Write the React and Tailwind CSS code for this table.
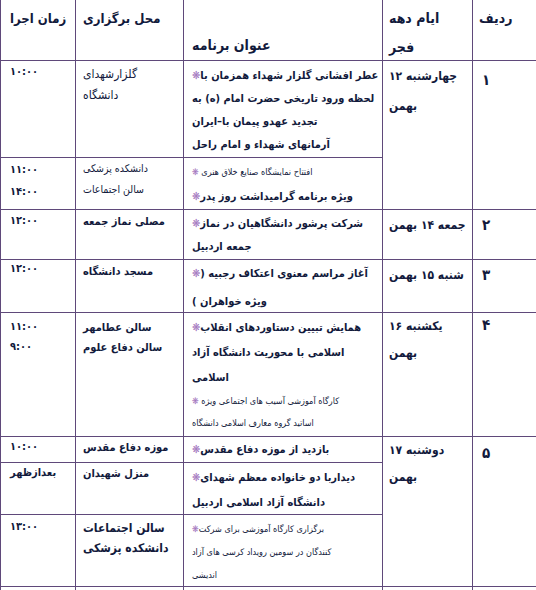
import React from "react";

const Star = () => <span className="text-[#a274bd]">❋</span>;

function Line({ children, className = "" }) {
  return <div className={`whitespace-nowrap ${className}`}>{children}</div>;
}

export default function App() {
  return (
    <div className="w-[536px] h-[590px] overflow-hidden bg-white">
      <div
        dir="rtl"
        className="grid w-[537px] px-px gap-px bg-[#5f497a] text-[#121a3c] font-['DejaVu_Sans_Condensed','DejaVu_Sans',sans-serif] font-stretch-condensed text-left grid-cols-[63px_89px_198px_107px_74px] grid-rows-[60px_96px_51px_49px_52px_123px_25px_51px_71px_30px]"
      >
        {/* header */}
        <div className="bg-white col-start-1 row-start-1 pl-[6px] pt-[4px] text-[14px] leading-[29px] font-bold"><Line>ردیف</Line></div>
        <div className="bg-white col-start-2 row-start-1 pl-[6px] pt-[4px] text-[14px] leading-[29px] font-bold">
          <Line>ایام دهه</Line>
          <Line>فجر</Line>
        </div>
        <div className="bg-white col-start-3 row-start-1 pl-[8px] pt-[31px] text-[14px] leading-[29px] font-bold"><Line>عنوان برنامه</Line></div>
        <div className="bg-white col-start-4 row-start-1 pl-[7px] pt-[4px] text-[13px] leading-[29px] font-bold"><Line>محل برگزاری</Line></div>
        <div className="bg-white col-start-5 row-start-1 pl-[9px] pt-[4px] text-[13px] leading-[29px] font-bold"><Line>زمان اجرا</Line></div>

        {/* row 1 */}
        <div className="bg-white col-start-1 row-start-2 row-span-2 pl-[9px] pt-[4px] text-[15px] leading-[30px] font-bold">۱</div>
        <div className="bg-white col-start-2 row-start-2 row-span-2 pl-[6px] pt-0 text-[12px] leading-[30px] font-bold">
          <Line>چهارشنبه ۱۲</Line>
          <Line>بهمن</Line>
        </div>
        <div className="bg-white col-start-3 row-start-2 pl-[8px] pt-[3px] text-[11px] leading-[23px] font-bold">
          <Line>عطر افشانی گلزار شهداء همزمان با<Star /></Line>
          <Line>لحظه ورود تاریخی حضرت امام (ه) به</Line>
          <Line>تجدید عهدو پیمان با–ایران </Line>
          <Line>آرمانهای شهداء و امام راحل</Line>
        </div>
        <div className="bg-white col-start-4 row-start-2 pl-[7px] pt-[3px] text-[12px] leading-[21px]">
          <Line>گلزارشهدای</Line>
          <Line>دانشگاه</Line>
        </div>
        <div className="bg-white col-start-5 row-start-2 pl-[9px] pt-[2px] text-[11px] leading-[18px] font-bold">
          <Line>۱۰:۰۰</Line>
        </div>

        <div className="bg-white col-start-3 row-start-3 pl-[8px] pt-[2px]">
          <Line className="text-[9px] leading-[24px]">افتتاح نمایشگاه صنایع خلاق هنری <Star /></Line>
          <Line className="text-[11px] leading-[26px] font-bold">ویژه برنامه گرامیداشت روز پدر<Star /></Line>
        </div>
        <div className="bg-white col-start-4 row-start-3 pl-[7px] pt-0 text-[10.5px] leading-[21px]">
          <Line>دانشکده پزشکی</Line>
          <Line>سالن اجتماعات</Line>
        </div>
        <div className="bg-white col-start-5 row-start-3 pl-[9px] pt-[1px] text-[11px] leading-[22px] font-bold">
          <Line>۱۱:۰۰</Line>
          <Line>۱۴:۰۰</Line>
        </div>

        {/* row 2 */}
        <div className="bg-white col-start-1 row-start-4 pl-[9px] pt-0 text-[15px] leading-[30px] font-bold">۲</div>
        <div className="bg-white col-start-2 row-start-4 pl-[6px] pt-0 text-[12px] leading-[30px] font-bold">
          <Line>جمعه ۱۴ بهمن</Line>
        </div>
        <div className="bg-white col-start-3 row-start-4 pl-[8px] pt-[2px] text-[11px] leading-[23px] font-bold">
          <Line>شرکت پرشور دانشگاهیان در نماز<Star /></Line>
          <Line>جمعه اردبیل</Line>
        </div>
        <div className="bg-white col-start-4 row-start-4 pl-[7px] pt-px text-[11px] leading-[22px] font-bold">
          <Line>مصلی نماز جمعه</Line>
        </div>
        <div className="bg-white col-start-5 row-start-4 pl-[9px] pt-[2px] text-[11px] leading-[18px] font-bold">
          <Line>۱۲:۰۰</Line>
        </div>

        {/* row 3 */}
        <div className="bg-white col-start-1 row-start-5 pl-[9px] pt-0 text-[15px] leading-[30px] font-bold">۳</div>
        <div className="bg-white col-start-2 row-start-5 pl-[6px] pt-0 text-[12px] leading-[30px] font-bold">
          <Line>شنبه ۱۵ بهمن</Line>
        </div>
        <div className="bg-white col-start-3 row-start-5 pl-[8px] pt-0 text-[11px] leading-[28px] font-bold">
          <Line>آغاز مراسم معنوی اعتکاف رجبیه (<Star /></Line>
          <Line>ویژه خواهران  )</Line>
        </div>
        <div className="bg-white col-start-4 row-start-5 pl-[7px] pt-px text-[11px] leading-[22px] font-bold">
          <Line>مسجد دانشگاه</Line>
        </div>
        <div className="bg-white col-start-5 row-start-5 pl-[9px] pt-0 text-[11px] leading-[18px] font-bold">
          <Line>۱۲:۰۰</Line>
        </div>

        {/* row 4 */}
        <div className="bg-white col-start-1 row-start-6 pl-[9px] pt-0 text-[15px] leading-[24px] font-bold">۴</div>
        <div className="bg-white col-start-2 row-start-6 pl-[6px] pt-0 text-[12px] leading-[27px] font-bold">
          <Line>یکشنبه ۱۶</Line>
          <Line>بهمن</Line>
        </div>
        <div className="bg-white col-start-3 row-start-6 pl-[8px] pt-[2px]">
          <div className="text-[11px] leading-[25px] font-bold">
            <Line>همایش تبیین دستاوردهای انقلاب<Star /></Line>
            <Line>اسلامی با محوریت دانشگاه آزاد</Line>
            <Line>اسلامی</Line>
          </div>
          <div className="text-[9px] leading-[22px]">
            <Line>کارگاه آموزشی آسیب های اجتماعی ویژه <Star /></Line>
            <Line>اساتید گروه معارف اسلامی دانشگاه</Line>
          </div>
        </div>
        <div className="bg-white col-start-4 row-start-6 pl-[7px] pt-[5px] text-[11px] leading-[20px] font-bold">
          <Line>سالن عطامهر</Line>
          <Line>سالن دفاع علوم</Line>
        </div>
        <div className="bg-white col-start-5 row-start-6 pl-[9px] pt-[4px] text-[11px] leading-[20px] font-bold">
          <Line>۱۱:۰۰</Line>
          <Line>۹:۰۰</Line>
        </div>

        {/* row 5 */}
        <div className="bg-white col-start-1 row-start-7 row-span-3 pl-[9px] pt-px text-[15px] leading-[30px] font-bold">۵</div>
        <div className="bg-white col-start-2 row-start-7 row-span-3 pl-[6px] pt-0 text-[12px] leading-[27px] font-bold">
          <Line>دوشنبه ۱۷</Line>
          <Line>بهمن</Line>
        </div>
        <div className="bg-white col-start-3 row-start-7 pl-[8px] pt-[1px] text-[11px] leading-[24px] font-bold">
          <Line>بازدید از موزه دفاع مقدس<Star /></Line>
        </div>
        <div className="bg-white col-start-4 row-start-7 pl-[7px] pt-0 text-[11px] leading-[22px] font-bold">
          <Line>موزه دفاع مقدس</Line>
        </div>
        <div className="bg-white col-start-5 row-start-7 pl-[9px] pt-px text-[11px] leading-[18px] font-bold">
          <Line>۱۰:۰۰</Line>
        </div>

        <div className="bg-white col-start-3 row-start-8 pl-[8px] pt-[2px] text-[11px] leading-[25px] font-bold">
          <Line>دیداربا دو خانواده معظم شهدای<Star /></Line>
          <Line>دانشگاه آزاد اسلامی اردبیل</Line>
        </div>
        <div className="bg-white col-start-4 row-start-8 pl-[7px] pt-0 text-[11px] leading-[22px] font-bold">
          <Line>منزل شهیدان</Line>
        </div>
        <div className="bg-white col-start-5 row-start-8 pl-[9px] pt-0 text-[11px] leading-[20px] font-bold">
          <Line>بعدازظهر</Line>
        </div>

        <div className="bg-white col-start-3 row-start-9 pl-[8px] pt-[3px] text-[9px] leading-[23px]">
          <Line>برگزاری کارگاه آموزشی برای شرکت<Star /></Line>
          <Line>کنندگان در سومین رویداد کرسی های آزاد</Line>
          <Line>اندیشی</Line>
        </div>
        <div className="bg-white col-start-4 row-start-9 pl-[7px] pt-[3px] text-[12px] leading-[20px] font-bold">
          <Line>سالن اجتماعات</Line>
          <Line>دانشکده پزشکی</Line>
        </div>
        <div className="bg-white col-start-5 row-start-9 pl-[9px] pt-[3px] text-[11px] leading-[18px] font-bold">
          <Line>۱۳:۰۰</Line>
        </div>

        {/* partial next row */}
        <div className="bg-white col-start-1 row-start-10"></div>
        <div className="bg-white col-start-2 row-start-10"></div>
        <div className="bg-white col-start-3 row-start-10"></div>
        <div className="bg-white col-start-4 row-start-10"></div>
        <div className="bg-white col-start-5 row-start-10"></div>
      </div>
    </div>
  );
}
